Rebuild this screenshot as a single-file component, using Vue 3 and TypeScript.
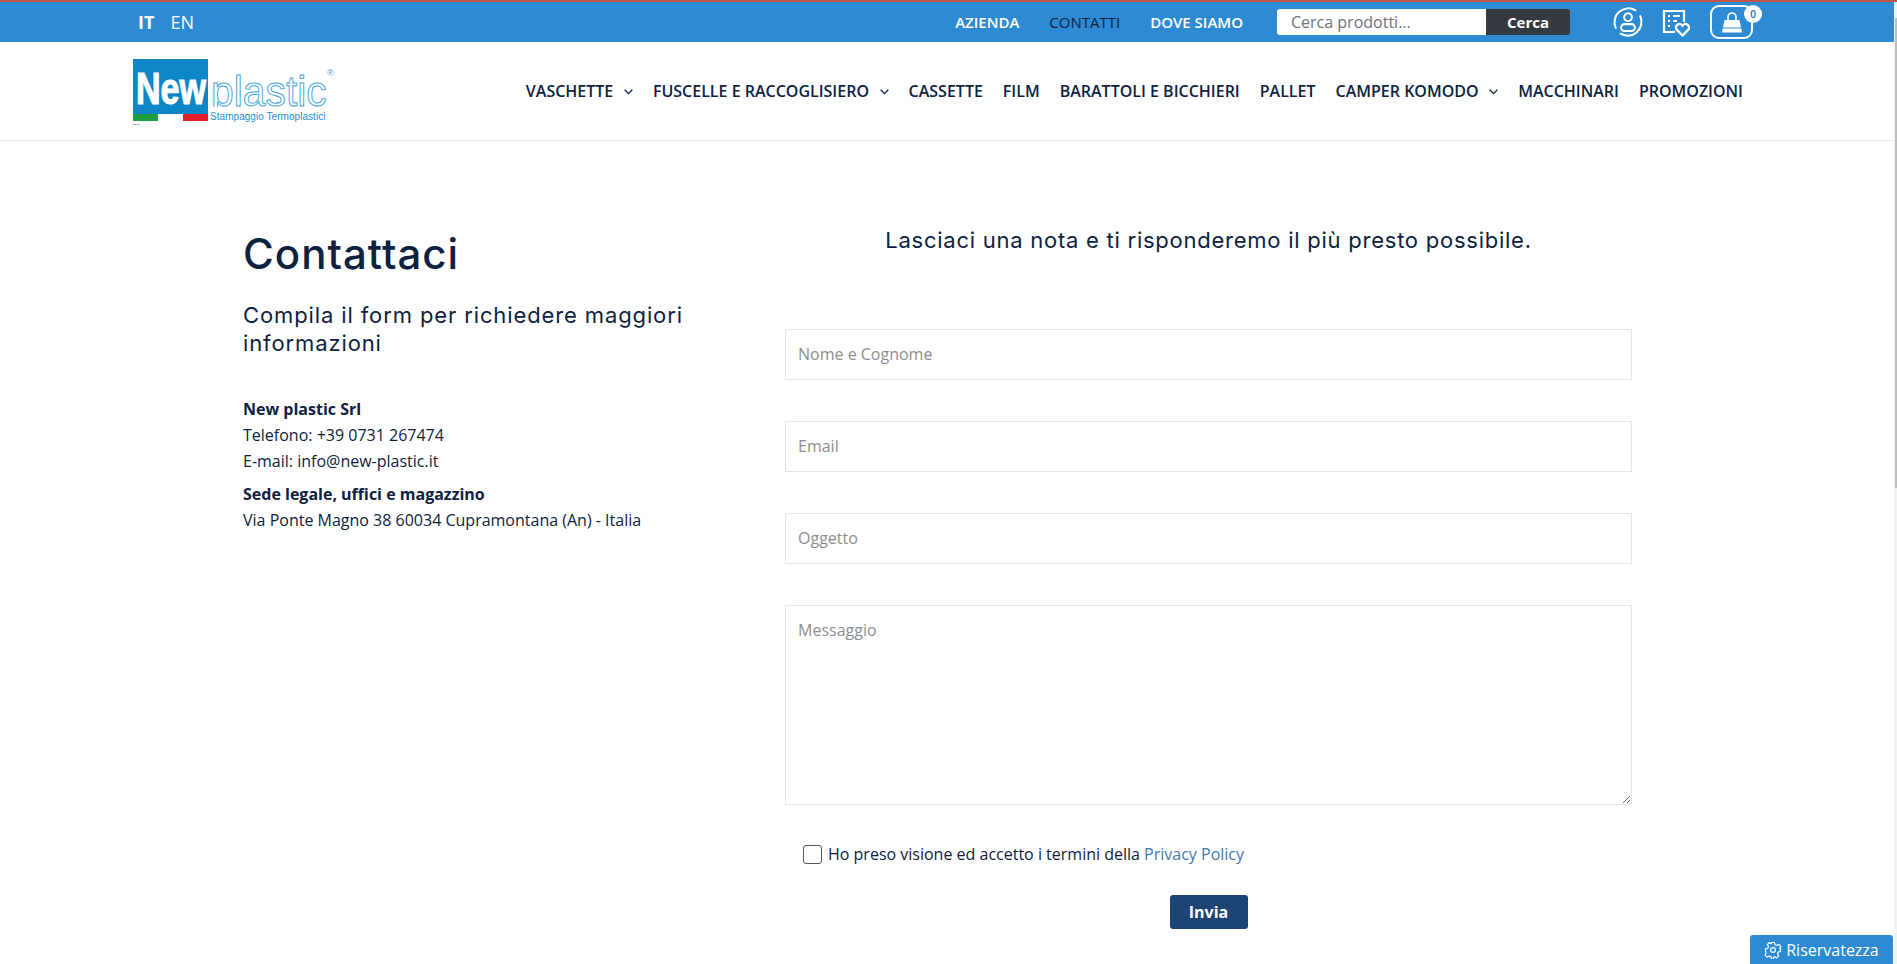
<script setup lang="ts">
interface NavItem { label: string; caret?: boolean }
const nav: NavItem[] = [
  { label: 'VASCHETTE', caret: true },
  { label: 'FUSCELLE E RACCOGLISIERO', caret: true },
  { label: 'CASSETTE' },
  { label: 'FILM' },
  { label: 'BARATTOLI E BICCHIERI' },
  { label: 'PALLET' },
  { label: 'CAMPER KOMODO', caret: true },
  { label: 'MACCHINARI' },
  { label: 'PROMOZIONI' },
]
</script>

<template>
  <div class="shell">
    <div class="page">
      <header class="topbar">
        <div class="langs"><b>IT</b><span>EN</span></div>
        <div class="topright">
          <nav class="toplinks">
            <a>AZIENDA</a>
            <a class="active">CONTATTI</a>
            <a>DOVE SIAMO</a>
          </nav>
          <div class="search">
            <input class="search-input" placeholder="Cerca prodotti..." />
            <button class="search-btn">Cerca</button>
          </div>
          <svg class="ic-user" width="32" height="32" viewBox="0 0 30 30" fill="none" stroke="#fff" stroke-width="1.900">
            <path d="M3.500 20.500A13 13 0 0 1 22 4" stroke-linecap="round" />
            <path d="M26.500 9.500A13 13 0 0 1 8 26" stroke-linecap="round" />
            <circle cx="15" cy="10.500" r="3.600" />
            <rect x="8.500" y="17" width="13" height="6.500" rx="3.200" />
          </svg>
          <svg class="ic-list" width="28" height="28" viewBox="0 0 28 28" fill="none" stroke="#fff" stroke-width="2.200">
            <path d="M13 23H2V2h20v11" />
            <path d="M6 7h2M11 7h7M6 12h2M11 12h4M6 17h2" />
            <path d="M20.500 26.500l-5.800-5.800a3.500 3.500 0 0 1 5.800-4.200 3.500 3.500 0 0 1 5.800 4.200z" stroke-width="2.400" />
          </svg>
          <div class="cart">
            <svg width="22" height="21" viewBox="0 0 22 21">
              <path d="M3.500 8h15l2.500 12.500H1z" fill="#fff" />
              <path d="M7 9V5a4 4 0 0 1 8 0v4" fill="none" stroke="#fff" stroke-width="1.600" />
              <path d="M2 16h18" stroke="#2e8bd3" stroke-width="1" />
            </svg>
            <span class="badge">0</span>
          </div>
        </div>
      </header>

      <div class="mainbar">
        <svg class="logo" width="202" height="68" viewBox="0 0 202 68">
          <defs>
            <clipPath id="plastic-clip"><rect x="74" y="0" width="128" height="48" /></clipPath>
          </defs>
          <rect x="0" y="0" width="75" height="55" fill="#0d86c8" />
          <rect x="0" y="55" width="25" height="7" fill="#1f9e3f" />
          <rect x="50" y="55" width="25" height="7" fill="#e41e2d" />
          <rect x="0" y="65" width="7" height="1" fill="#bbb" />
          <text transform="translate(3 45) scale(.757 1)" class="logo-new">New</text>
          <g clip-path="url(#plastic-clip)">
            <text transform="translate(78 47) scale(.95 1)" class="logo-plastic">plastic</text>
          </g>
          <text x="194" y="17" class="logo-r">®</text>
          <text x="77" y="61" class="logo-sub">Stampaggio Termoplastici</text>
        </svg>
        <nav class="mainnav">
          <a v-for="item in nav" :key="item.label" class="navitem">
            {{ item.label }}
            <svg v-if="item.caret" class="caret" width="9" height="6" viewBox="0 0 9 6" fill="none" stroke="#0d2240" stroke-width="1.300">
              <path d="M.7.8l3.800 3.800L8.300.8" />
            </svg>
          </a>
        </nav>
      </div>

      <main class="content">
        <section class="left">
          <h1>Contattaci</h1>
          <h2>Compila il form per richiedere maggiori informazioni</h2>
          <p class="block1"><b>New plastic Srl</b><br />Telefono: +39 0731 267474<br />E-mail: info@new-plastic.it</p>
          <p class="block2"><b>Sede legale, uffici e magazzino</b><br />Via Ponte Magno 38 60034 Cupramontana (An) - Italia</p>
        </section>
        <section class="right">
          <h3>Lasciaci una nota e ti risponderemo il più presto possibile.</h3>
          <form class="form">
            <input class="field" placeholder="Nome e Cognome" />
            <input class="field" placeholder="Email" />
            <input class="field" placeholder="Oggetto" />
            <textarea class="field area" placeholder="Messaggio"></textarea>
            <label class="consent">
              <span class="check"></span>
              <span>Ho preso visione ed accetto i termini della <a>Privacy Policy</a></span>
            </label>
            <div class="send"><button type="button" class="send-btn">Invia</button></div>
          </form>
        </section>
      </main>

      <div class="privacy">
        <svg width="18" height="18" viewBox="0 0 24 24" fill="none" stroke="#fff" stroke-width="1.600" stroke-linejoin="round">
          <circle cx="12" cy="12" r="3.200" />
          <path d="M10 2h4l.7 3 2.300 1 2.700-1.600 2.800 2.800L20.900 10 22 10.500v3.500l-3 .8-1 2.300 1.600 2.700-2.800 2.800-2.600-1.600-1.200.5-.9 2.500H10l-.7-3-2.300-1-2.700 1.600-2.800-2.800L3 14.800 2 14v-3.500l3-.8 1-2.300L4.400 4.800 7.200 2 9.800 3.600z" />
        </svg>
        Riservatezza
      </div>
    </div>
    <div class="scrolltrack"><div class="scrollthumb"></div></div>
  </div>
</template>

<style>
html, body { margin: 0; background: #fff; overflow: hidden; }
</style>

<style scoped>
.shell {
  position: relative;
  height: 964px;
  box-sizing: border-box;
  border-top: 2px solid #c0564a;
  overflow: hidden;
}
.scrolltrack {
  position: absolute;
  top: 0;
  right: 0;
  bottom: 0;
  width: 3px;
  background: #f2f2f2;
}
.scrollthumb {
  position: absolute;
  top: 16px;
  right: 0;
  width: 2px;
  height: 470px;
  background: #bdbdbd;
}
.page {
  position: relative;
  width: 1894px;
  height: 962px;
  font-family: "Open Sans", sans-serif;
  color: #0d2240;
  font-size: 16px;
}
.topbar {
  height: 40px;
  background: #2e8bd3;
  color: #fff;
  display: flex;
  align-items: center;
  justify-content: space-between;
  padding: 0 141px 0 138px;
}
.langs { display: flex; gap: 16px; font-size: 18px; }
.langs b { font-weight: 700; }
.topright { display: flex; align-items: center; }
.toplinks { display: flex; gap: 30px; font-size: 15px; font-weight: 600; margin-right: 34px; }
.toplinks .active { color: #0d2240; font-weight: 400; }
.search { display: flex; height: 26px; margin-right: 42px; }
.search-input {
  width: 209px;
  border: 0;
  padding: 0 14px;
  border-radius: 3px 0 0 3px;
  font: 16px "Open Sans", sans-serif;
  box-sizing: border-box;
  outline: none;
}
.search-input::placeholder { color: #6c757d; }
.search-btn {
  width: 84px;
  background: #343a40;
  color: #fff;
  border: 0;
  border-radius: 0 3px 3px 0;
  font: 700 15px "Open Sans", sans-serif;
  padding: 0;
}
.ic-list { margin-left: 18px; margin-top: 2px; }
.cart {
  position: relative;
  margin-left: 20px;
  width: 43px;
  height: 34px;
  border: 2px solid #fff;
  border-radius: 9px;
  display: flex;
  align-items: center;
  justify-content: center;
  box-sizing: border-box;
}
.badge {
  position: absolute;
  top: -2px;
  right: -11px;
  width: 18px;
  height: 18px;
  border-radius: 50%;
  background: #fff;
  color: #2e6d9e;
  font-size: 10px;
  font-weight: 600;
  text-align: center;
  line-height: 18px;
}
.mainbar {
  height: 98px;
  border-bottom: 1px solid #e8e8e8;
  display: flex;
  align-items: center;
  justify-content: space-between;
  padding: 0 151px 0 133px;
}
.logo { margin-top: 3px; }
.logo-new { font: 700 45px "Liberation Sans", sans-serif; fill: #fff; stroke: #fff; stroke-width: 1.200; }
.logo-plastic { font: 400 43px "Liberation Sans", sans-serif; fill: #fff; stroke: #3fa6dc; stroke-width: 1; }
.logo-r { font: 9px "Liberation Sans", sans-serif; fill: #3fa6dc; }
.logo-sub { font: 10px "Liberation Sans", sans-serif; letter-spacing: .05px; fill: #1c8fd0; }
.mainnav { display: flex; gap: 20px; font-size: 16px; font-weight: 600; }
.navitem { display: flex; align-items: center; white-space: nowrap; }
.caret { margin-left: 10.600px; margin-top: 2px; }
.content {
  display: flex;
  padding: 87px 262px 0 243px;
}
.left { width: 542px; flex: none; }
h1 {
  margin: 0;
  font: 500 42px/52px "Inter", sans-serif;
  letter-spacing: 1px;
}
h2 {
  margin: 21px 0 0;
  font: 400 22px/28px "Inter", sans-serif;
  letter-spacing: .88px;
  width: 470px;
}
.block1, .block2 { margin: 0; font-size: 16px; line-height: 26px; }
.block1 { margin-top: 39px; }
.block2 { margin-top: 7px; }
.right { flex: 1; min-width: 0; }
h3 {
  margin: 0;
  text-align: center;
  font: 400 22px/24px "Inter", sans-serif;
  letter-spacing: .75px;
}
.form { margin-top: 77px; display: flex; flex-direction: column; }
.field {
  display: block;
  width: 100%;
  box-sizing: border-box;
  height: 51px;
  border: 1px solid #e6e6e6;
  padding: 0 12px 2px;
  font: 16px "Open Sans", sans-serif;
  color: #333;
  margin-bottom: 41px;
  outline: none;
}
.field::placeholder { color: #8e8e8e; }
.area { height: 200px; padding-top: 13px; margin-bottom: 39px; resize: vertical; }
.consent { display: flex; align-items: center; gap: 6px; padding-left: 18px; font-size: 16px; line-height: 20px; }
.consent a { color: #3f7ab5; }
.check {
  width: 19px;
  height: 19px;
  box-sizing: border-box;
  border: 1px solid #555;
  border-radius: 3px;
  background: #fff;
}
.send { display: flex; justify-content: center; margin-top: 31px; }
.send-btn {
  width: 78px;
  height: 34px;
  background: #1e4476;
  color: #fff;
  border: 0;
  border-radius: 3px;
  font: 700 16px "Open Sans", sans-serif;
  padding: 0;
}
.privacy {
  position: absolute;
  right: 1px;
  bottom: 0;
  width: 143px;
  height: 29px;
  background: #2e8bd3;
  color: #fff;
  border-radius: 3px 3px 0 0;
  display: flex;
  align-items: center;
  justify-content: center;
  gap: 4px;
  font-size: 16px;
}
</style>
